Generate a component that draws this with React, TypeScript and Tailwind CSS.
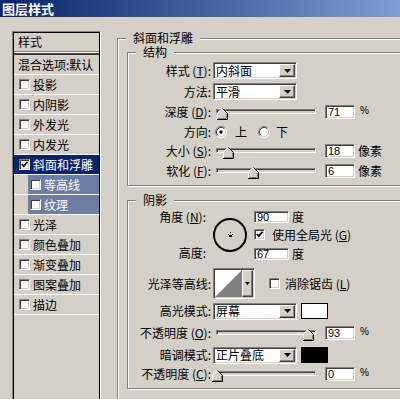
import type { ReactNode } from 'react';

const SUNKEN =
  'border border-t-[#808080] border-l-[#808080] border-b-white border-r-white shadow-[inset_1px_1px_0_#404040,inset_-1px_-1px_0_#d4d0c8]';
const RAISED =
  'border border-t-white border-l-white border-b-[#404040] border-r-[#404040] shadow-[inset_-1px_-1px_0_#808080] bg-[#d4d0c8]';

function Arrow() {
  return (
    <svg width="7" height="4" viewBox="0 0 7 4">
      <path d="M0 0H7L3.5 4Z" fill="#000" />
    </svg>
  );
}

function Check() {
  return (
    <svg width="7" height="7" viewBox="0 0 7 7">
      <path d="M0.8 3 L2.8 5.2 L6.5 0.8" stroke="#000" strokeWidth="1.8" fill="none" />
    </svg>
  );
}

function Checkbox({ checked = false, className = '' }: { checked?: boolean; className?: string }) {
  return (
    <div className={`${SUNKEN} bg-white w-[11px] h-[11px] shrink-0 flex items-center justify-center ${className}`}>
      {checked && <Check />}
    </div>
  );
}

function Radio({ checked = false }: { checked?: boolean }) {
  return (
    <svg width="12" height="12" viewBox="0 0 12 12" className="shrink-0">
      <circle cx="6" cy="6" r="4.5" fill="#fff" />
      <path d="M2.11 9.89 A5.5 5.5 0 0 1 9.89 2.11" stroke="#808080" fill="none" />
      <path d="M9.89 2.11 A5.5 5.5 0 0 1 2.11 9.89" stroke="#fff" fill="none" />
      <path d="M2.82 9.18 A4.5 4.5 0 0 1 9.18 2.82" stroke="#404040" fill="none" />
      <path d="M9.18 2.82 A4.5 4.5 0 0 1 2.82 9.18" stroke="#d4d0c8" fill="none" />
      {checked && <circle cx="6" cy="6" r="1.7" fill="#000" />}
    </svg>
  );
}

function NumBox({ value, className = 'w-[30px] h-[14px]' }: { value: string; className?: string }) {
  return (
    <div
      className={`${SUNKEN} bg-white shrink-0 flex items-center pl-[2px] text-[11px] font-['Liberation_Sans',sans-serif] ${className}`}
    >
      {value}
    </div>
  );
}

function Dropdown({ value }: { value: string }) {
  return (
    <div className={`${SUNKEN} bg-white ml-[2px] w-[84px] h-[17px] p-[1px] flex shrink-0`}>
      <span className="flex-1 flex items-center pl-[1px]">{value}</span>
      <div className={`${RAISED} w-[16px] h-full flex items-center justify-center`}>
        <Arrow />
      </div>
    </div>
  );
}

function Thumb() {
  return (
    <svg width="11" height="12" viewBox="0 0 11 12">
      <path d="M5 0 L10 5 V11 H0 V5 Z" fill="#d4d0c8" />
      <path d="M0.5 11 V5.2 L5.2 0.5" stroke="#fff" fill="none" />
      <path d="M5.5 0.5 L10.5 5.5 V11.5 H0" stroke="#000" fill="none" />
      <path d="M9.5 5.9 V10.5 H1" stroke="#808080" fill="none" />
    </svg>
  );
}

function Slider({ thumb }: { thumb: string }) {
  return (
    <div className="relative ml-[5px] w-[100px] h-[14px] shrink-0">
      <div className={`${SUNKEN} mt-[4px] h-[5px] bg-[#d4d0c8]`} />
      <div className={`absolute top-[3px] ${thumb}`}>
        <Thumb />
      </div>
    </div>
  );
}

function Label({ children, className = 'w-[83px]' }: { children: ReactNode; className?: string }) {
  return <div className={`${className} shrink-0 text-right whitespace-nowrap`}>{children}</div>;
}

function Group({ title, className, children }: { title: string; className: string; children?: ReactNode }) {
  return (
    <div className={`relative border border-[#808080] shadow-[inset_1px_1px_0_#fff,1px_1px_0_#fff] ${className}`}>
      <span className="absolute top-[-7px] left-[8px] px-[7px] h-[12px] leading-[12px] bg-[#d4d0c8] whitespace-nowrap">
        {title}
      </span>
      {children}
    </div>
  );
}

function SliderRow({ label, thumb, value, unit, className }: { label: ReactNode; thumb: string; value: string; unit: string; className: string }) {
  return (
    <div className={`flex items-center h-[14px] ${className}`}>
      <Label>{label}</Label>
      <Slider thumb={thumb} />
      <div className="ml-[9px]">
        <NumBox value={value} />
      </div>
      {unit === '%' ? (
        <span className="ml-[5px] text-[10px] font-['Liberation_Sans',sans-serif] -mt-[3px]">%</span>
      ) : (
        <span className="ml-[3px]">{unit}</span>
      )}
    </div>
  );
}

const STYLES = ['投影', '内阴影', '外发光', '内发光'];
const STYLES_AFTER = ['光泽', '颜色叠加', '渐变叠加', '图案叠加', '描边'];

function StyleList() {
  return (
    <div className="ml-[12px] mt-[14px] w-[89px] h-[400px] shrink-0 p-[1px] border border-t-[#808080] border-l-[#808080] border-r-white border-b-white shadow-[inset_1px_1px_0_#000,inset_-1px_0_0_#000]">
      <div className="h-[18px] pl-[4px] flex items-center">样式</div>
      <div className="h-[1px] bg-[#808080]" />
      <div className="h-[1px] bg-white" />
      <div className="h-[2px] bg-[#404040]" />
      <div className="h-[20px] pl-[4px] flex items-center border-b border-white whitespace-nowrap">混合选项:默认</div>
      {STYLES.map((s) => (
        <div key={s} className="h-[20px] pl-[5px] flex items-center border-b border-white">
          <Checkbox />
          <span className="ml-[3px]">{s}</span>
        </div>
      ))}
      <div className="h-[20px] pl-[5px] flex items-center border-b border-white bg-[#0a246a] text-white">
        <Checkbox checked />
        <span className="ml-[3px]">斜面和浮雕</span>
      </div>
      {['等高线', '纹理'].map((s) => (
        <div key={s} className="h-[20px] flex border-b border-white">
          <div className="w-[14px]" />
          <div className="flex-1 flex items-center pl-[2px] bg-[#6e7da6] text-white">
            <Checkbox />
            <span className="ml-[3px]">{s}</span>
          </div>
        </div>
      ))}
      {STYLES_AFTER.map((s) => (
        <div key={s} className="h-[20px] pl-[5px] flex items-center border-b border-white">
          <Checkbox />
          <span className="ml-[3px]">{s}</span>
        </div>
      ))}
    </div>
  );
}

function AngleDial() {
  return (
    <svg width="34" height="34" viewBox="0 0 34 34">
      <circle cx="17" cy="17" r="16" stroke="#000" strokeWidth="2" fill="none" />
      <rect x="16" y="17" width="3" height="2" fill="#000" />
      <rect x="17" y="14" width="1" height="1" fill="#000" />
      <rect x="15" y="16" width="1" height="1" fill="#000" />
      <rect x="19" y="16" width="1" height="1" fill="#000" />
    </svg>
  );
}

function Contour() {
  return (
    <div className={`${SUNKEN} ml-[2px] w-[42px] h-[31px] p-[1px] flex shrink-0 bg-white`}>
      <svg className="flex-1 h-full" viewBox="0 0 28 27" preserveAspectRatio="none">
        <path d="M0 27 L28 0 V27 Z" fill="#808080" />
      </svg>
      <div className={`${RAISED} w-[11px] h-full flex items-center justify-center`}>
        <svg width="5" height="3" viewBox="0 0 5 3">
          <path d="M0 0H5L2.5 3Z" fill="#000" />
        </svg>
      </div>
    </div>
  );
}

export default function App() {
  return (
    <div className="w-[400px] h-[399px] overflow-hidden bg-[#d4d0c8] text-[12px] leading-none text-black font-['Noto_Sans_CJK_SC','Noto_Sans',sans-serif]">
      <div className="h-[17px] bg-linear-to-r from-[#0a246a] to-[#7f9fd2] flex items-center pl-[2px] text-white font-bold text-[13px]">
        图层样式
      </div>
      <div className="flex">
        <StyleList />
        <Group title="斜面和浮雕" className="ml-[16px] mt-[21px] w-[300px] h-[400px] shrink-0 pl-[9px] pt-[13px]">
          <Group title="结构" className="w-[290px] h-[134px] flex flex-col">
            <div className="flex items-center mt-[9px] h-[17px]">
              <Label>样式 (<span className="underline">T</span>):</Label>
              <Dropdown value="内斜面" />
            </div>
            <div className="flex items-center mt-[4px] h-[17px]">
              <Label>方法:</Label>
              <Dropdown value="平滑" />
            </div>
            <SliderRow className="mt-[5px]" label={<>深度 (<span className="underline">D</span>):</>} thumb="left-[1px]" value="71" unit="%" />
            <div className="flex items-center mt-[6px] h-[14px]">
              <Label>方向:</Label>
              <div className="ml-[4px]">
                <Radio checked />
              </div>
              <span className="ml-[8px]">上</span>
              <div className="ml-[11px]">
                <Radio />
              </div>
              <span className="ml-[6px]">下</span>
            </div>
            <SliderRow className="mt-[5px]" label={<>大小 (<span className="underline">S</span>):</>} thumb="left-[7px]" value="18" unit="像素" />
            <SliderRow className="mt-[6px]" label={<>软化 (<span className="underline">F</span>):</>} thumb="left-[32px]" value="6" unit="像素" />
          </Group>
          <Group title="阴影" className="mt-[14px] w-[290px] h-[189px] flex flex-col">
            <div className="mt-[10px] flex h-[50px]">
              <div className="w-[78px] shrink-0 flex flex-col justify-between">
                <div className="h-[12px] flex items-center justify-end">角度 (<span className="underline">N</span>):</div>
                <div className="h-[12px] flex items-center justify-end mb-[2px]">高度:</div>
              </div>
              <div className="ml-[7px] mt-[7px]">
                <AngleDial />
              </div>
              <div className="ml-[7px] flex flex-col">
                <div className="flex items-center h-[12px]">
                  <NumBox value="90" className="w-[35px] h-[12px]" />
                  <span className="ml-[3px]">度</span>
                </div>
                <div className="mt-[6px] flex items-center h-[11px]">
                  <Checkbox checked />
                  <span className="ml-[7px] whitespace-nowrap">使用全局光 (<span className="underline">G</span>)</span>
                </div>
                <div className="mt-[8px] flex items-center h-[12px]">
                  <NumBox value="67" className="w-[35px] h-[12px]" />
                  <span className="ml-[3px]">度</span>
                </div>
              </div>
            </div>
            <div className="mt-[7px] flex items-center h-[31px]">
              <Label>光泽等高线:</Label>
              <Contour />
              <Checkbox className="ml-[14px]" />
              <span className="ml-[5px] whitespace-nowrap">消除锯齿 (<span className="underline">L</span>)</span>
            </div>
            <div className="mt-[4px] flex items-center h-[16px]">
              <Label>高光模式:</Label>
              <Dropdown value="屏幕" />
              <div className="ml-[4px] w-[27px] h-[16px] border border-black bg-white" />
            </div>
            <SliderRow className="mt-[7px]" label={<>不透明度 (<span className="underline">O</span>):</>} thumb="left-[87px]" value="93" unit="%" />
            <div className="mt-[7px] flex items-center h-[16px]">
              <Label>暗调模式:</Label>
              <Dropdown value="正片叠底" />
              <div className="ml-[4px] w-[27px] h-[16px] border border-black bg-black" />
            </div>
            <SliderRow className="mt-[4px]" label={<>不透明度 (<span className="underline">C</span>):</>} thumb="-left-[4px]" value="0" unit="%" />
          </Group>
        </Group>
      </div>
    </div>
  );
}
